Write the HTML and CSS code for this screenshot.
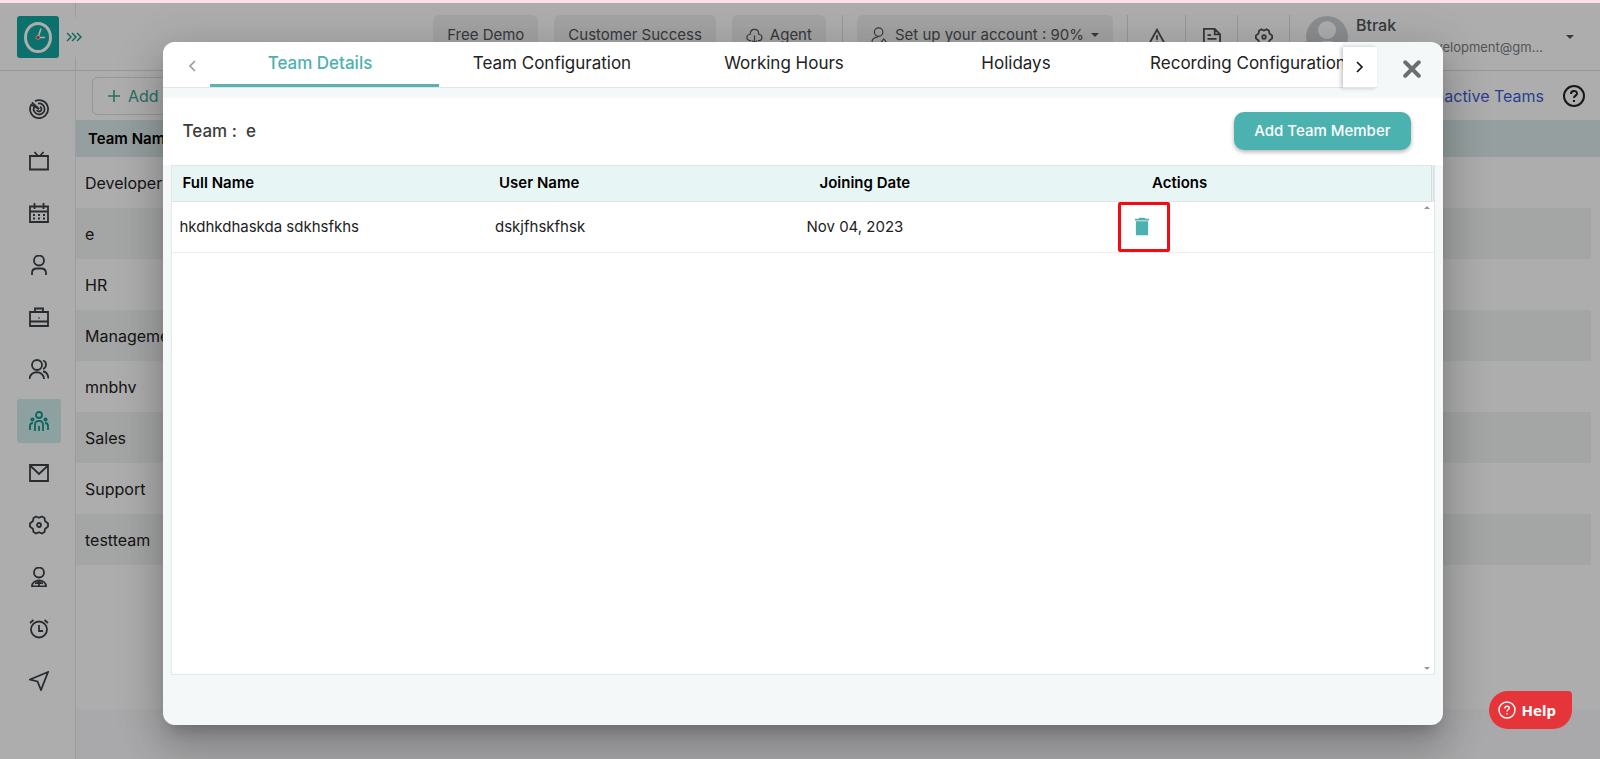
FILE: index.html
```html
<!DOCTYPE html>
<html lang="en">
<head>
<meta charset="utf-8">
<title>Teams</title>
<link rel="stylesheet" href="styles.css">
</head>
<body>
<div class="strip"></div>
<div class="app">
  <aside class="sidebar">
    <div class="brand">
      <svg class="logo" viewBox="0 0 42 42"><rect width="42" height="42" rx="3" fill="#12a5a0"/><ellipse cx="21" cy="21.500" rx="12.500" ry="14" fill="none" stroke="#fff" stroke-width="3"/><path d="M21 21.500l3-9M21 21.500h7" stroke="#fff" stroke-width="1.6"/><circle cx="21" cy="21.500" r="2" fill="#e2344c" stroke="#fff" stroke-width=".6"/></svg>
    </div>
    <nav class="menu">
      <button class="item" aria-label="Dashboard"><svg viewBox="0 0 20 20"><path d="M6 2.100A9 9 0 1 1 2.300 5.600L10 10"/><path d="M9 4.600A5.500 5.500 0 1 1 5 8"/><path d="M2.800 3.400L10 10M11 7.700A2.500 2.500 0 1 1 7.700 11"/></svg></button>
      <button class="item" aria-label="Screens"><svg viewBox="0 0 20 20"><path d="M1 5h18v13.500H1zM5.500 1l3.500 4M14.500 1L11 5"/></svg></button>
      <button class="item" aria-label="Calendar"><svg viewBox="0 0 20 20"><path d="M1 3.500h18V19H1zM1 8.500h18M5.500 0v6M14.500 0v6"/><path d="M4 12h2M9 12h2M14 12h2M4 15.500h2M9 15.500h2M14 15.500h2"/></svg></button>
      <button class="item" aria-label="Profile"><svg viewBox="0 0 20 20"><circle cx="10" cy="5.500" r="5"/><path d="M3 20v-2c0-3 2-4.500 5-4.500h4c3 0 5 1.500 5 4.500v2"/></svg></button>
      <button class="item" aria-label="Projects"><svg viewBox="0 0 20 20"><path d="M1 5h18v14H1zM6 5V1.500h8V5M1 14.500h18M9.500 11h1"/></svg></button>
      <button class="item" aria-label="Users"><svg viewBox="0 0 20 20"><circle cx="8" cy="6" r="5"/><path d="M0.500 20c0-9 14.500-9 14.500 0M14 1.500c4 1 4 7 0 8.500M14 12.500c3 0 5 3 5.500 7"/></svg></button>
      <button class="item active" aria-label="Teams"><svg viewBox="0 0 20 20"><circle cx="10" cy="4" r="3"/><circle cx="3.500" cy="8.500" r="1.200"/><circle cx="16.500" cy="8.500" r="1.200"/><path d="M6 20v-6c0-5.500 8-5.500 8 0v6M1 19v-4c0-2 1-3 3-3M19 19v-4c0-2-1-3-3-3M10 15v5"/></svg></button>
      <button class="item" aria-label="Mail"><svg viewBox="0 0 20 20"><path d="M1 2h18v16H1zM1 2.500l9 8.500 9-8.500"/></svg></button>
      <button class="item" aria-label="Settings"><svg viewBox="0 0 20 20"><path d="M7 1.500l3 1.300 3-1.300 2.500 1.500.5 3L19 8.500v3L16 14l-.5 3-2.500 1.500-3-1.300-3 1.300L4.500 17 4 14 1 11.500v-3L4 6l.5-3z"/><circle cx="10" cy="10" r="2"/></svg></button>
      <button class="item" aria-label="Roles"><svg viewBox="0 0 20 20"><circle cx="10" cy="5.500" r="5"/><path d="M3 19.500c0-8 14-8 14 0zM10 13.500v6M6 16.500l4-1 4 1"/></svg></button>
      <button class="item" aria-label="Time"><svg viewBox="0 0 20 20"><circle cx="10" cy="10.500" r="8"/><path d="M10 6v6h4M1 4l3.500-3M19 4l-3.500-3"/></svg></button>
      <button class="item" aria-label="Send"><svg viewBox="0 0 20 20"><path d="M19 1L1 8.500l7.500 2L12 19z"/></svg></button>
    </nav>
  </aside>
  <div class="page">
    <header class="top">
      <button class="expand" aria-label="Expand menu"><svg viewBox="0 0 16 10"><path d="M1 1l4 4-4 4M6 1l4 4-4 4M11 1l4 4-4 4"/></svg></button>
      <div class="tools">
        <button class="pill">Free Demo</button>
        <button class="pill">Customer Success</button>
        <button class="pill"><svg class="ic" viewBox="0 0 20 20"><path d="M6 16H5C-.5 16 0 9 5 8.500 5 1 15 1 15 8.500c5 .5 5 7.500 0 7.500h-1M10 10v9M7 16l3 3 3-3"/></svg>Agent</button>
        <div class="group"><button class="pill setup"><svg class="ic" viewBox="0 0 20 20"><circle cx="9" cy="6" r="5"/><path d="M1 19c0-5 3-7 7-7M11 19l4-5 4 5z"/></svg>Set up your account : 90%<i class="caret"></i></button></div>
        <button class="tool" aria-label="Alerts"><svg viewBox="0 0 20 20"><path d="M10 2L1 18h18zM10 8v5M10 15v1"/></svg></button>
        <button class="tool" aria-label="Notes"><svg viewBox="0 0 20 20"><path d="M1 1h12l6 6v12H1zM13 1v6h6M5 8h4M5 12h10"/></svg></button>
        <button class="tool" aria-label="Preferences"><svg viewBox="0 0 20 20"><path d="M7 1.500l3 1.300 3-1.300 2.500 1.500.5 3L19 8.500v3L16 14l-.5 3-2.500 1.500-3-1.300-3 1.300L4.500 17 4 14 1 11.500v-3L4 6l.5-3z"/><circle cx="10" cy="10" r="2"/></svg></button>
      </div>
      <div class="account">
        <svg class="avatar" viewBox="0 0 42 42"><circle cx="21" cy="21" r="21" fill="#ccd2d6"/><circle cx="21" cy="14" r="9" fill="#fff"/><path d="M6 36c2-15 28-15 30 0a21 21 0 0 1-30 0" fill="#fff"/></svg>
        <div class="who"><strong>Btrak</strong><span>btrak1235.development@gm...</span></div>
        <i class="caret"></i>
      </div>
    </header>
    <div class="bar">
      <button class="add"><svg viewBox="0 0 12 12"><path d="M6 0v12M0 6h12"/></svg>Add Team</button>
      <div class="links"><a href="#">Inactive Teams</a><svg viewBox="0 0 22 22"><circle cx="11" cy="11" r="10"/><path d="M8 9c0-4 6-4 6-.5 0 2-3 2.300-3 4.500M11 15v2"/></svg></div>
    </div>
    <table class="teams">
      <thead><tr><th>Team Name</th></tr></thead>
      <tbody>
        <tr><td>Developers</td></tr><tr><td>e</td></tr><tr><td>HR</td></tr><tr><td>Management</td></tr>
        <tr><td>mnbhv</td></tr><tr><td>Sales</td></tr><tr><td>Support</td></tr><tr><td>testteam</td></tr>
      </tbody>
    </table>
    <div class="fill"></div>
    <footer class="foot"></footer>
  </div>
</div>

<div class="overlay">
  <section class="dialog" role="dialog" aria-label="Team Details">
    <div class="head">
      <button class="arrow prev" aria-label="Previous tabs"><svg viewBox="0 0 8 12"><path d="M7 1L2 6l5 5"/></svg></button>
      <div class="tabs">
        <button class="tab on">Team Details</button>
        <button class="tab">Team Configuration</button>
        <button class="tab">Working Hours</button>
        <button class="tab">Holidays</button>
        <button class="tab">Recording Configuration</button>
      </div>
      <button class="arrow next" aria-label="Next tabs"><svg viewBox="0 0 8 12"><path d="M1 1l5 5-5 5"/></svg></button>
      <button class="close" aria-label="Close"><svg viewBox="0 0 16 16"><path d="M2 2l12 12M14 2L2 14"/></svg></button>
    </div>
    <div class="title"><h2>Team : &nbsp;e</h2><button class="primary">Add Team Member</button></div>
    <div class="grid">
      <table class="members">
        <thead><tr><th>Full Name</th><th>User Name</th><th>Joining Date</th><th>Actions</th></tr></thead>
        <tbody><tr><td>hkdhkdhaskda sdkhsfkhs</td><td>dskjfhskfhsk</td><td>Nov 04, 2023</td><td><button class="trash" aria-label="Delete"><svg viewBox="0 0 16 20"><path d="M5 0h6l1 1h4v2H0V1h4zM1 4h14v16H1z"/></svg></button></td></tr></tbody>
      </table>
      <div class="scroll"><i class="up"></i><i class="down"></i></div>
    </div>
  </section>
</div>
<button class="help"><svg viewBox="0 0 18 18"><circle cx="9" cy="9" r="8"/><path d="M6.800 7.500c0-3 4.500-3 4.500-.5 0 1.500-2.300 1.700-2.300 3.500M9 12v1.500"/></svg>Help</button>
</body>
</html>
```
FILE: styles.css
```css
* { box-sizing: border-box; }
body {
  margin: 0;
  height: 100vh;
  display: flex;
  flex-direction: column;
  overflow: hidden;
  font: 16px/24px Inter, "Open Sans", sans-serif;
  color: #222;
  background: #fff;
}
button { font: inherit; color: inherit; border: 0; padding: 0; background: none; cursor: pointer; }
svg { display: block; fill: none; stroke: currentColor; stroke-width: 1.6; }

.strip { height: 3px; background: #fde0e7; flex: none; }
.app { flex: 1; min-height: 0; display: flex; }

.sidebar { flex: none; width: 76px; border-right: 1px solid #e4e6e8; color: #3c4246; }
.brand { height: 68px; padding: 13px 0 0 17px; border-bottom: 1px solid #dcdfe1; }
.logo { width: 42px; height: 42px; stroke: none; }
.menu { display: flex; flex-direction: column; gap: 8px; padding: 16px 0 0 17px; }
.item { width: 44px; height: 44px; display: grid; place-items: center; border-radius: 3px; }
.item svg { width: 20px; height: 20px; stroke-width: 1.8; }
.item.active { background: #d0eeee; color: #12958b; }

.page { flex: 1; min-width: 0; display: flex; flex-direction: column; background: #fff; }
.top { height: 68px; flex: none; display: flex; align-items: flex-start; border-bottom: 1px solid #dcdfe1; color: #50565a; }
.expand { width: 28px; height: 40px; margin: 14px 0 0 -13px; padding-left: 3px; background: #fff; color: #12958b; position: relative; }
.expand svg { width: 16px; height: 10px; stroke-width: 1.4; }
.tools { flex: 1; display: flex; justify-content: flex-end; padding: 12px 0 0; }
.pill { height: 40px; margin: 0 16px 0 0; padding: 0 14px; display: flex; align-items: center; gap: 7px; border-radius: 6px; background: #f0f1f2; font-size: 15px; white-space: nowrap; }
.group { height: 44px; padding-left: 14px; border-left: 1px solid #dcdfe1; }
.pill.setup { margin-right: 14px; }
.pill .ic { width: 17px; height: 17px; stroke-width: 1.4; }
.tool { width: 52px; height: 44px; display: grid; place-items: center; border-left: 1px solid #dcdfe1; }
.group + .tool { width: 58px; }
.tool svg { width: 18px; height: 18px; stroke-width: 2; }
.caret { width: 0; height: 0; border: 4px solid transparent; border-top-color: currentColor; border-bottom: 0; }
.account { width: 311px; height: 44px; margin-top: 12px; padding: 0 26px 0 16px; display: flex; align-items: center; border-left: 1px solid #dcdfe1; }
.avatar { flex: none; width: 42px; height: 42px; stroke: none; }
.who { flex: 1; min-width: 0; padding: 0 0 5px 8px; display: flex; flex-direction: column; white-space: nowrap; }
.who strong { font-weight: 500; }
.who span { font-size: 13px; line-height: 20px; color: #7a7f83; }

.bar { height: 49px; flex: none; display: flex; align-items: center; justify-content: space-between; padding: 0 15px 0 16px; }
.add { height: 38px; padding: 0 15px; display: flex; align-items: center; gap: 8px; border: 1px solid #dcdfe1; border-radius: 5px; color: #3aa493; }
.add svg { width: 12px; height: 12px; }
.links { display: flex; align-items: center; gap: 19px; }
.links a { color: #3d5fd8; text-decoration: none; }
.links svg { width: 22px; height: 22px; stroke-width: 2; }

table { border-collapse: separate; border-spacing: 0; width: 100%; }
th { text-align: left; font-weight: 600; color: #000; }
.teams th { height: 37px; padding: 0 12px; font-size: 15px; background: #dcebeb; }
.teams td { height: 51px; padding: 0 9px; font-size: 16px; border-right: 9px solid #fff; }
.teams tbody tr:nth-child(even) td { background: #f2f4f4; background-clip: padding-box; }
.fill { flex: 1; }
.foot { height: 50px; flex: none; background: #f9f9fc; }

.overlay { position: absolute; inset: 3px 0 0 0; background: rgba(0, 0, 0, .32); display: flex; justify-content: center; align-items: center; padding: 5px 0 0 5px; }
.dialog { width: 80vw; height: 91%; display: flex; flex-direction: column; padding-bottom: 50px; overflow: hidden; border-radius: 12px; background: #f4f8f9; box-shadow: 0 11px 15px -7px rgba(0, 0, 0, .2), 0 24px 38px 3px rgba(0, 0, 0, .14), 0 9px 46px 8px rgba(0, 0, 0, .12); }
.head { flex: none; display: flex; height: 56px; padding-bottom: 10px; }
.arrow { flex: none; display: grid; place-items: center; background: #fff; border-bottom: 1px solid #e0e4e5; }
.arrow svg { width: 8px; height: 12px; }
.prev { width: 47px; padding-left: 12px; padding-top: 4px; color: #999; }
.next { width: 34px; margin-top: 5px; color: #111; box-shadow: -2px 0 4px rgba(0, 0, 0, .22); position: relative; }
.tabs { flex: 1; min-width: 0; display: flex; gap: 3px; overflow: hidden; background: #fff; border-bottom: 1px solid #e0e4e5; }
.tab { flex: none; width: 229px; padding: 0 8px 0 0; border-bottom: 3px solid transparent; font-size: 17px; white-space: nowrap; text-align: center; }
.tab.on { color: #4db1ae; font-weight: 500; border-color: #5db1ae; }
.close { flex: none; width: 66px; padding: 9px 0 0 4px; display: grid; place-items: center; color: #6b6f70; }
.close svg { width: 18px; height: 18px; stroke-width: 3.5; stroke-linecap: round; }

.title { flex: none; height: 67px; padding: 0 32px 0 20px; display: flex; align-items: center; justify-content: space-between; background: #fff; }
h2 { margin: 0; font-size: 17px; font-weight: 500; color: #3c3c3c; }
.primary { height: 38px; padding: 0 20px; border-radius: 10px; background: #4bb2b0; color: #fff; font-size: 15px; font-weight: 500; box-shadow: 0 2px 4px rgba(0, 0, 0, .3); }

.grid { flex: 1; min-height: 0; margin: 0 8px; position: relative; background: #fff; border: 1px solid #e0e8e8; }
.members { table-layout: fixed; font-size: 15px; }
.members th { height: 36px; background: #e8f5f5; border-bottom: 1px solid #dbe5e5; }
.members th:nth-child(1) { padding: 0 0 0 11px; }
.members th:nth-child(2) { padding: 0 0 0 12px; }
.members th:nth-child(3) { padding: 0 0 0 17px; }
.members th:nth-child(4) { padding: 0 0 0 34px; border-right: 3px double #d3dfdf; }
.members td { height: 51px; padding: 0 8px; border-bottom: 1px solid #eee; }
.members td:nth-child(3) { padding: 0 0 0 4px; }
.members td:last-child { padding: 0; }
.trash { display: grid; place-items: center; width: 52px; height: 50px; border: 3px solid #f50a14; border-radius: 2px; padding-right: 5px; color: #4bb2b0; }
.trash svg { width: 14px; height: 19px; fill: currentColor; stroke: none; }
.scroll { position: absolute; top: 40px; right: 4px; bottom: 4px; display: flex; flex-direction: column; justify-content: space-between; color: #999; }
.up, .down { border: 3px solid transparent; }
.up { border-bottom-color: currentColor; border-top: 0; }
.down { border-top-color: currentColor; border-bottom: 0; }

.help { position: absolute; right: 28px; bottom: 30px; height: 38px; padding: 0 16px 0 9px; display: flex; align-items: center; gap: 6px; border-radius: 19px 4px 19px 19px; background: #e6353a; color: #fff; font-family: "Noto Sans", sans-serif; font-weight: 700; font-size: 15px; }
.help svg { width: 18px; height: 18px; stroke-width: 1.4; }
```
